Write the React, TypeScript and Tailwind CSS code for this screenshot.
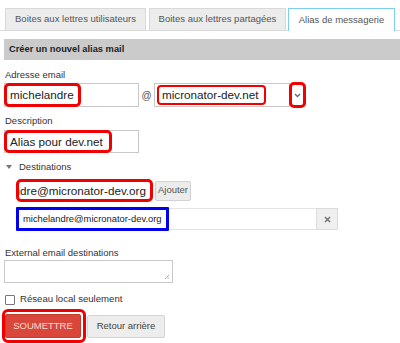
import React from "react";

const redBox = "border-[3px] border-[#f00000] rounded-[5px]";

export default function App() {
  return (
    <div className="w-[400px] h-[343px] bg-white overflow-hidden font-['Liberation_Sans',Arial,sans-serif] text-[9.5px] text-[#333]">
      {/* Tabs */}
      <div className="flex items-end pt-[8px] pl-[5px] h-[31px] border-b border-[#dcdcdc]">
        <div className="w-[141px] h-[23px] mb-[-1px] bg-[#ececec] border border-[#d9d9d9] flex items-center justify-center text-[#555]">
          Boites aux lettres utilisateurs
        </div>
        <div className="ml-[3px] w-[137px] h-[23px] mb-[-1px] bg-[#ececec] border border-[#d9d9d9] flex items-center justify-center text-[#555]">
          Boites aux lettres partagées
        </div>
        <div className="ml-[2px] w-[107px] h-[23px] mb-[-1px] bg-white border border-b-0 border-[#7ccfee] flex items-center justify-center text-[#555]">
          Alias de messagerie
        </div>
      </div>

      {/* Section header */}
      <div className="mt-[8px] ml-[4px] h-[21px] bg-[#cbcbcb] flex items-center pl-[5px] font-bold text-[9.3px] text-[#222]">
        Créer un nouvel alias mail
      </div>

      {/* Adresse email */}
      <div className="mt-[9px] pl-[5px] h-[12px] leading-[12px]">Adresse email</div>
      <div className="mt-[2px] pl-[4px] h-[24px] flex items-center">
        <div className="relative w-[135px] h-[24px] border border-[#c8c8c8] bg-white">
          <div className={`absolute left-[-1px] top-[-1px] w-[77px] h-[24px] ${redBox} flex items-center pl-[3px] text-[11.7px] text-[#222]`}>
            michelandre
          </div>
        </div>
        <span className="w-[15px] text-center text-[10px] text-[#555]">@</span>
        <div className="w-[136px] h-[24px] border border-[#c8c8c8] bg-white flex items-center pl-[2px]">
          <div className="w-[109px] h-[20px] border-[2px] border-[#f00000] rounded-[4px] flex items-center pl-[3px] text-[11.7px] text-[#222] whitespace-nowrap">
            micronator-dev.net
          </div>
        </div>
        <div className={`ml-[-1px] w-[17px] h-[26px] ${redBox} bg-white flex items-center justify-center`}>
          <svg width="7" height="5" viewBox="0 0 7 5">
            <path d="M1 1 L3.5 3.5 L6 1" stroke="#666" strokeWidth="1.3" fill="none" />
          </svg>
        </div>
      </div>

      {/* Description */}
      <div className="mt-[8px] pl-[5px] h-[12px] leading-[12px]">Description</div>
      <div className="mt-[3px] pl-[4px]">
        <div className="relative w-[135px] h-[23px] border border-[#c8c8c8] bg-white">
          <div className={`absolute left-[-1px] top-[-1px] w-[108px] h-[23px] ${redBox} flex items-center pl-[3px] text-[11.7px] text-[#222] whitespace-nowrap`}>
            Alias pour dev.net
          </div>
        </div>
      </div>

      {/* Destinations */}
      <div className="mt-[8px] pl-[6px] h-[12px] leading-[12px] flex items-center">
        <svg width="6" height="4" viewBox="0 0 6 4" className="mr-[7px]">
          <path d="M0 0 L6 0 L3 4 Z" fill="#777" />
        </svg>
        <span>Destinations</span>
      </div>
      <div className="mt-[6px] pl-[16px] h-[23px] flex items-center">
        <div className={`w-[137px] h-[23px] ${redBox} bg-white overflow-hidden flex items-center justify-end pr-[4px] text-[11.7px] text-[#222] whitespace-nowrap`}>
          <span>michelandre@micronator-dev.org</span>
        </div>
        <div className="ml-[2px] w-[36px] h-[20px] bg-[#ececec] border border-[#d2d2d2] rounded-[2px] flex items-center justify-center text-[#555]">
          Ajouter
        </div>
      </div>

      {/* List row */}
      <div className="mt-[5px] pl-[16px]">
        <div className="relative w-[322px] h-[24px] flex items-center">
          <div className="w-[300px] h-[22px] border border-[#e3e3e3] border-r-0 bg-white" />
          <div className="w-[22px] h-[22px] bg-[#efefef] border border-[#dcdcdc] flex items-center justify-center">
            <svg width="7" height="7" viewBox="0 0 7 7">
              <path d="M1 1 L6 6 M6 1 L1 6" stroke="#777" strokeWidth="1.6" />
            </svg>
          </div>
          <div className="absolute left-0 top-0 w-[153px] h-[24px] border-[3px] border-[#0000f0] rounded-[1px] flex items-center pl-[4px] text-[9.4px] text-[#222] whitespace-nowrap">
            michelandre@micronator-dev.org
          </div>
        </div>
      </div>

      {/* External */}
      <div className="mt-[16px] pl-[5px] h-[12px] leading-[12px]">External email destinations</div>
      <div className="mt-[1px] pl-[4px]">
        <div className="relative w-[169px] h-[23px] border border-[#c8c8c8] bg-white">
          <svg width="6" height="6" viewBox="0 0 6 6" className="absolute right-[2px] bottom-[2px]">
            <path d="M5 1 L1 5 M5 3.5 L3.5 5" stroke="#999" strokeWidth="0.8" />
          </svg>
        </div>
      </div>

      {/* Checkbox */}
      <div className="mt-[10px] pl-[5px] h-[13px] flex items-center">
        <div className="w-[10px] h-[10px] border border-[#777] bg-white rounded-[1px]" />
        <span className="ml-[5px] text-[9.6px]">Réseau local seulement</span>
      </div>

      {/* Buttons */}
      <div className="mt-[3px] pl-[2px] flex items-start">
        <div className="w-[84px] h-[34px] border-[3px] border-[#f00000] rounded-[6px] pt-[2px] pr-[2px]">
          <div className="w-[76px] h-[24px] bg-[#d9473a] border border-[#c63a2e] rounded-[2px] flex items-center justify-center text-[#f8dcd8] text-[9.5px]">
            SOUMETTRE
          </div>
        </div>
        <div className="ml-[1px] mt-[6px] w-[78px] h-[23px] bg-[#ededed] border border-[#d4d4d4] rounded-[2px] flex items-center justify-center text-[#444]">
          Retour arrière
        </div>
      </div>
    </div>
  );
}
